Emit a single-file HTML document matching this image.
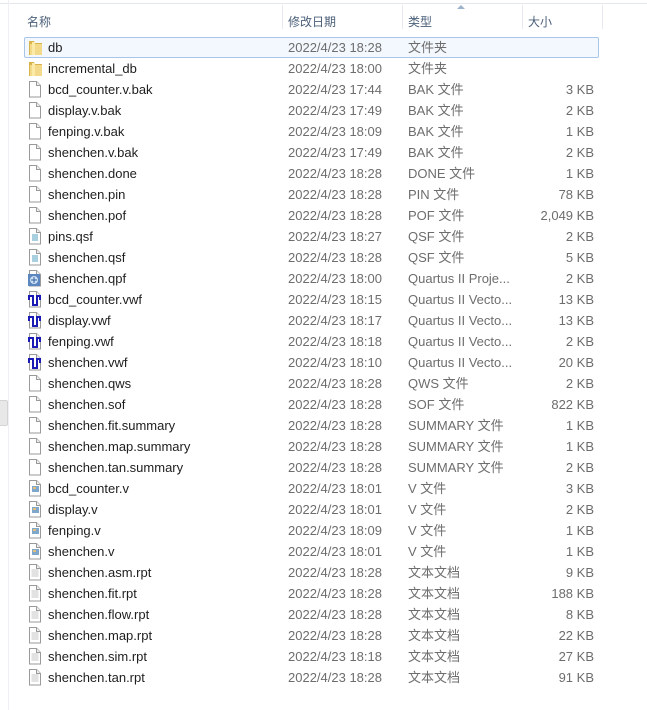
<!DOCTYPE html>
<html><head><meta charset="utf-8"><style>
*{margin:0;padding:0;box-sizing:border-box}
body{width:647px;height:710px;background:#fff;position:relative;overflow:hidden;font-family:"Liberation Sans","Noto Sans CJK SC",sans-serif;font-size:13px}
.top{position:absolute;left:0;top:0;width:647px;height:4px;border-bottom:1px solid #e3e6ea;background:#fff}
.hdr{position:absolute;top:16px;color:#4c607a;font-size:12px;line-height:1}
.sep{position:absolute;top:5px;width:1px;height:24px;background:#e6eaf0}
.vline{position:absolute;left:8px;top:0;width:1px;height:710px;background:#eef0f3}
.row{position:absolute;left:24px;width:575px;height:21px}
.row span{position:absolute;top:3px;white-space:nowrap;line-height:15px}
.n{left:24px;color:#1e1e1e}
.d{left:264px;color:#6d6d6d}
.t{left:384px;color:#6d6d6d}
.s{right:5px;color:#6d6d6d}
.ic{position:absolute;left:4px;top:2px}
.sel{background:#f3f8fe;border:1px solid #a9c6ea;border-radius:2px}
.sel span{top:2px}
.sel .n{left:23px}.sel .d{left:263px}.sel .t{left:383px}
.sel .ic{left:3px;top:1px}
</style></head><body>
<div class="top"></div>
<div class="vline"></div>
<div style="position:absolute;left:0;top:400px;width:8px;height:26px;background:#e8e8e8;border:1px solid #d4d4d4;border-left:none;border-radius:0 2px 2px 0"></div>
<div class="hdr" style="left:27px">名称</div>
<div class="hdr" style="left:288px">修改日期</div>
<div class="hdr" style="left:408px">类型</div>
<div class="hdr" style="left:528px">大小</div>
<div class="sep" style="left:282px"></div>
<div class="sep" style="left:402px"></div>
<div class="sep" style="left:522px"></div>
<div class="sep" style="left:602px"></div>
<svg style="position:absolute;left:457px;top:5px" width="8" height="5"><path d="M0 4 L4 0 L8 4Z" fill="#9db3cc"/></svg>
<div id="rows"></div>
<script>
const R=[
["f","db","2022/4/23 18:28","文件夹",""],
["f","incremental_db","2022/4/23 18:00","文件夹",""],
["p","bcd_counter.v.bak","2022/4/23 17:44","BAK 文件","3 KB"],
["p","display.v.bak","2022/4/23 17:49","BAK 文件","2 KB"],
["p","fenping.v.bak","2022/4/23 18:09","BAK 文件","1 KB"],
["p","shenchen.v.bak","2022/4/23 17:49","BAK 文件","2 KB"],
["p","shenchen.done","2022/4/23 18:28","DONE 文件","1 KB"],
["p","shenchen.pin","2022/4/23 18:28","PIN 文件","78 KB"],
["p","shenchen.pof","2022/4/23 18:28","POF 文件","2,049 KB"],
["q","pins.qsf","2022/4/23 18:27","QSF 文件","2 KB"],
["q","shenchen.qsf","2022/4/23 18:28","QSF 文件","5 KB"],
["j","shenchen.qpf","2022/4/23 18:00","Quartus II Proje...","2 KB"],
["w","bcd_counter.vwf","2022/4/23 18:15","Quartus II Vecto...","13 KB"],
["w","display.vwf","2022/4/23 18:17","Quartus II Vecto...","13 KB"],
["w","fenping.vwf","2022/4/23 18:18","Quartus II Vecto...","2 KB"],
["w","shenchen.vwf","2022/4/23 18:10","Quartus II Vecto...","20 KB"],
["p","shenchen.qws","2022/4/23 18:28","QWS 文件","2 KB"],
["p","shenchen.sof","2022/4/23 18:28","SOF 文件","822 KB"],
["p","shenchen.fit.summary","2022/4/23 18:28","SUMMARY 文件","1 KB"],
["p","shenchen.map.summary","2022/4/23 18:28","SUMMARY 文件","1 KB"],
["p","shenchen.tan.summary","2022/4/23 18:28","SUMMARY 文件","2 KB"],
["v","bcd_counter.v","2022/4/23 18:01","V 文件","3 KB"],
["v","display.v","2022/4/23 18:01","V 文件","2 KB"],
["v","fenping.v","2022/4/23 18:09","V 文件","1 KB"],
["v","shenchen.v","2022/4/23 18:01","V 文件","1 KB"],
["t","shenchen.asm.rpt","2022/4/23 18:28","文本文档","9 KB"],
["t","shenchen.fit.rpt","2022/4/23 18:28","文本文档","188 KB"],
["t","shenchen.flow.rpt","2022/4/23 18:28","文本文档","8 KB"],
["t","shenchen.map.rpt","2022/4/23 18:28","文本文档","22 KB"],
["t","shenchen.sim.rpt","2022/4/23 18:18","文本文档","27 KB"],
["t","shenchen.tan.rpt","2022/4/23 18:28","文本文档","91 KB"]];
const page='<path d="M1.5 .5h7l4 4v11.5h-11z" fill="#fff" stroke="#9a9a9a"/><path d="M8.5 .5v4h4" fill="#eee" stroke="#9a9a9a"/>';
const I={
f:'<svg class="ic" width="16" height="17"><path d="M1 2h5l1 2h7v12H1z" fill="#d8b24a"/><path d="M2 5h12v11H2z" fill="#f3d98a"/><path d="M4 3h3v13H4z" fill="#fbeaa8"/></svg>',
p:'<svg class="ic" width="16" height="17">'+page+'</svg>',
q:'<svg class="ic" width="16" height="17">'+page+'<rect x="4" y="6" width="6" height="7" fill="#a8d0e0"/></svg>',
j:'<svg class="ic" width="16" height="17">'+page+'<rect x="0" y="4" width="12" height="12" fill="#5b86c0"/><circle cx="6" cy="10" r="4" fill="#cfe2f5"/><path d="M3 10h6M6 7v6" stroke="#2f5d9c"/></svg>',
w:'<svg class="ic" width="16" height="17">'+page+'<path d="M1 9V5h4v9h4V5h3v4" fill="none" stroke="#1a1ab4" stroke-width="2"/></svg>',
v:'<svg class="ic" width="16" height="17">'+page+'<rect x="4" y="6" width="7" height="6" fill="#7fa7cc"/><rect x="5" y="7" width="3" height="2" fill="#e3c07a"/></svg>',
t:'<svg class="ic" width="16" height="17">'+page+'<path d="M3.5 6h7M3.5 8h7M3.5 10h7M3.5 12h7" stroke="#c4c4c4"/></svg>'};
let h='';R.forEach((r,i)=>{h+=`<div class="row${i==0?' sel':''}" style="top:${37+i*21}px">${I[r[0]]}<span class="n">${r[1]}</span><span class="d">${r[2]}</span><span class="t">${r[3]}</span><span class="s">${r[4]}</span></div>`});
document.getElementById('rows').innerHTML=h;
</script>
</body></html>
